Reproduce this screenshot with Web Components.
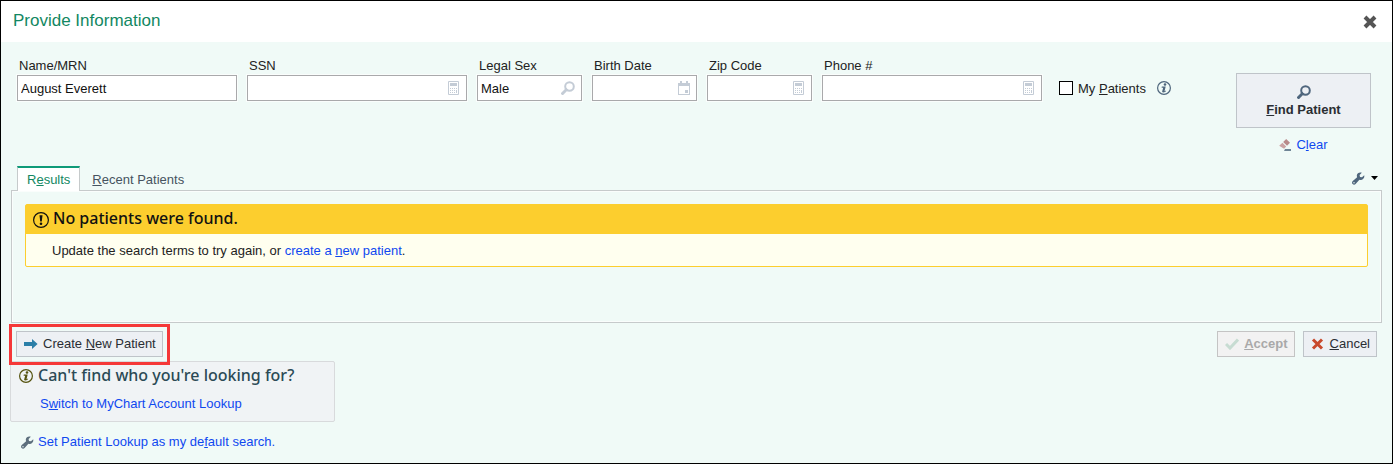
<!DOCTYPE html>
<html lang="en">
<head>
<meta charset="utf-8">
<title>Provide Information</title>
<style>
body { margin: 0; font: 13px/16px "Liberation Sans", Arial, sans-serif; color: #222; }
</style>
</head>
<body>
<patient-lookup></patient-lookup>
<script>
const define = (name, html, setup) => customElements.define(name, class extends HTMLElement {
  connectedCallback() {
    if (this.shadowRoot) return;
    const t = document.createElement('template');
    t.innerHTML = html;
    this.attachShadow({ mode: 'open' }).append(t.content.cloneNode(true));
    if (setup) setup(this, this.shadowRoot);
  }
});

const icons = {
  calc: [12, 14, '<path d="M.5.5h10v13H.5z" fill="#fff" stroke="#c4ccd6"/><path d="M2 2h7v3H2zM2 7h1v1H2zM4 7h1v1H4zM6 7h1v1H6zM8 7h1v1H8zM2 9h1v1H2zM4 9h1v1H4zM6 9h1v1H6zM8 9h1v3H8zM2 11h1v1H2zM4 11h1v1H4zM6 11h1v1H6z" fill="#c4ccd6"/>'],
  date: [12, 14, '<path d="M0 2h2V0h2v2h4V0h2v2h2v12H0zM1 5v8h10V5zM7 9h3v3H7z" fill="#c4ccd6" fill-rule="evenodd"/>'],
  search: [14, 14, '<circle cx="8.5" cy="5.5" r="4.3" fill="none" stroke="currentColor" stroke-width="2"/><path d="M5.2 8.800L1.600 12.400" stroke="currentColor" stroke-width="3" stroke-linecap="square"/>'],
  close: [14, 14, '<path d="M2 2l10 10M12 2L2 12" stroke="currentColor" stroke-width="4"/>'],
  info: [14, 14, '<circle cx="7" cy="7" r="6.4" fill="none" stroke="currentColor" stroke-width="1.2"/><circle cx="8" cy="3.500" r="1.3" fill="currentColor"/><path d="M4.800 5.500h3.900L7.500 10.200l1.600-.6-.3.9c-1.300.9-3.100 1.200-3.600.6-.3-.4.600-2.800 1-4.400H4.600z" fill="currentColor"/>'],
  alert: [16, 16, '<circle cx="8" cy="8" r="7.4" fill="none" stroke="currentColor" stroke-width="1.2"/><path d="M6.5 3.2h3L8.8 9.4H7.2z" fill="currentColor"/><circle cx="8" cy="11.8" r="1.3" fill="currentColor"/>'],
  eraser: [12, 12, '<path d="M7.2 0L11 3.800 8 6.800 4.200 3z" fill="#b98b8b"/><path d="M3.400 3.800L7.200 7.600 5.600 9.200c-.4.4-1 .4-1.400 0L.200 6.800z" fill="#cba3a3"/><path d="M6 10h6v2H5z" fill="#6f8596"/>'],
  wrench: [13, 13, '<path d="M12.200 3.200L10 5.300 8 4.900 7.600 3 9.800.8C7.800-.2 5 .9 4.800 3.600c0 .6.1 1.100.3 1.600L.8 9C-.2 10-.2 11.200.600 12c.9.900 2.100.900 3-.1L7.400 7.700c2.800 1 5.600-1.400 4.800-4.500zM2 10.100a.7.7 0 1 1 0 1.400.7.7 0 0 1 0-1.400z" fill="currentColor" fill-rule="evenodd"/>'],
  arrow: [14, 10, '<path d="M0 3h8V0l5.600 5L8 10V7H0z" fill="#2b7fa8"/>'],
  check: [14, 12, '<path d="M1 6l4 4L13 1.500" fill="none" stroke="#c7dcd2" stroke-width="3"/>'],
  cross: [14, 12, '<path d="M2 1.500l9 9M11 1.500l-9 9" stroke="#c8492c" stroke-width="3"/>'],
  caret: [7, 4, '<path d="M0 0h7L3.500 4z" fill="#000"/>']
};

define('pl-icon', '<style>:host{display:inline-flex;flex:none}svg{display:block}</style>', (el, root) => {
  const [w, h, body] = icons[el.getAttribute('name')];
  root.innerHTML += `<svg width="${w}" height="${h}" viewBox="0 0 ${w} ${h}" aria-hidden="true">${body}</svg>`;
});

define('pl-link', `<style>
  :host { display: inline; }
  a { color: #0f48f0; text-decoration: none; }
  </style><a href="#"><slot></slot></a>`);

define('pl-field', `<style>
  :host { display: block; flex: 0 1 220px; min-width: 0; }
  :host([short]) { flex-basis: 105px; }
  label { display: block; padding: 0 2px; line-height: 18px; white-space: nowrap; }
  .box { display: flex; align-items: center; height: 26px; box-sizing: border-box; padding-right: 6px;
         border: 1px solid #a9a9ab; background: #fff; box-shadow: 0 0 0 1px #fafdfc; color: #c4ccd6; }
  input { flex: 1; min-width: 0; padding: 2px 3px 0; border: 0; outline: 0; background: none; font: inherit; color: #111; }
  </style><label for="v"></label><div class="box"><input id="v" type="text"></div>`, (el, root) => {
  root.querySelector('label').textContent = el.getAttribute('label');
  root.querySelector('input').value = el.getAttribute('value') || '';
  const icon = el.getAttribute('icon');
  if (icon) root.querySelector('.box').insertAdjacentHTML('beforeend', `<pl-icon name="${icon}"></pl-icon>`);
});

define('pl-check', `<style>
  :host { display: flex; align-items: center; }
  label { display: flex; align-items: center; gap: 5px; white-space: nowrap; }
  input { appearance: none; width: 14px; height: 14px; margin: 0; border: 1px solid #000; background: #fff; }
  span { padding-top: 2px; }
  </style><label><input type="checkbox"><span><slot></slot></span></label>`);

define('pl-button', `<style>
  :host { display: block; position: relative; flex: none; }
  button { display: flex; align-items: center; gap: 5px; height: 26px; width: 100%; box-sizing: border-box; margin: 0; padding: 0 6px 0 7px;
           border: 1px solid #bfc4c9; background: #edf0f4; font: inherit; color: #2a2e33; white-space: nowrap; }
  button:disabled { background: #f2f2f2; color: #a9a9a9; border-color: #c4c4c4; font-weight: bold; }
  :host([large]) button { flex-direction: column; justify-content: center; height: 55px; gap: 3px; font-weight: bold; padding: 2px 0 0; }
  :host([marked])::after { content: ""; position: absolute; inset: -7px -7px -8px; border: 3px solid #f53838; z-index: 1; pointer-events: none; }
  </style><button type="button"><slot name="icon"></slot><span><slot></slot></span></button>`, (el, root) => {
  root.querySelector('button').disabled = el.hasAttribute('disabled');
});

define('pl-header', `<style>
  :host { display: flex; align-items: center; justify-content: space-between; height: 41px; padding: 0 15px 0 12px; background: #fff; }
  h1 { margin: 0; padding-bottom: 2px; font-size: 17px; line-height: 20px; font-weight: normal; color: #128762; }
  button { display: flex; padding: 0; border: 0; background: none; color: #555; }
  </style><h1><slot></slot></h1><button type="button" aria-label="Close"><pl-icon name="close"></pl-icon></button>`);

define('pl-search', `<style>
  :host { display: flex; align-items: flex-start; padding: 15px 21px 0 16px; }
  .fields { flex: 1; display: flex; gap: 10px; min-width: 0; }
  .mine { display: flex; align-items: center; gap: 11px; height: 26px; margin: 18px 0 0 7px; color: #4f667d; }
  pl-check { color: #222; }
  .go { flex: none; width: 135px; padding-top: 16px; }
  .clear { display: flex; align-items: center; justify-content: center; gap: 5px; margin-top: 9px; }
  </style>
  <div class="fields">
    <pl-field label="Name/MRN" value="August Everett"></pl-field>
    <pl-field label="SSN" icon="calc"></pl-field>
    <pl-field short label="Legal Sex" value="Male" icon="search"></pl-field>
    <pl-field short label="Birth Date" icon="date"></pl-field>
    <pl-field short label="Zip Code" icon="calc"></pl-field>
    <pl-field label="Phone #" icon="calc"></pl-field>
    <div class="mine"><pl-check>My <u>P</u>atients</pl-check><pl-icon name="info"></pl-icon></div>
  </div>
  <div class="go">
    <pl-button large><pl-icon slot="icon" name="search" style="color:#4f667d"></pl-icon><u>F</u>ind Patient</pl-button>
    <div class="clear"><pl-icon name="eraser"></pl-icon><pl-link>C<u>l</u>ear</pl-link></div>
  </div>`);

define('pl-tabs', `<style>
  :host { display: block; padding: 13px 10px 0; }
  .bar { display: flex; align-items: flex-end; padding: 0 4px 0 6px; }
  .tab { height: 24px; box-sizing: border-box; padding: 4px 12px 0; border: 0; background: none; font: inherit; color: #46535f; }
  .tab.on { position: relative; z-index: 1; padding: 0 9px; margin-bottom: -1px; height: 25px; border: 1px solid #c6cacb; border-top: 2px solid #0f9a78; border-bottom: 0; background: #fff; color: #128762; }
  .tools { display: flex; align-items: center; gap: 6px; height: 24px; margin-left: auto; padding: 0; border: 0; background: none; color: #4f667d; }
  .panel { min-height: 133px; box-sizing: border-box; padding: 13px; border: 1px solid #c6cacb; box-shadow: inset 0 0 0 1px #fafdfc; }
  </style>
  <div class="bar">
    <button type="button" class="tab on">R<u>e</u>sults</button>
    <button type="button" class="tab"><u>R</u>ecent Patients</button>
    <button type="button" class="tools" aria-label="Options"><pl-icon name="wrench"></pl-icon><pl-icon name="caret"></pl-icon></button>
  </div>
  <div class="panel"><slot></slot></div>`);

define('pl-notice', `<style>
  :host { display: block; border: 1px solid #fcce2e; border-radius: 2px; background: #ffffef; }
  h2 { display: flex; align-items: center; gap: 4px; height: 29px; margin: 0; padding: 0 7px; background: #fcce2e; color: #111;
       font: 500 16px/24px "Noto Sans", sans-serif; }
  ::slotted(span) { padding-bottom: 4px; }
  p { margin: 0; padding: 9px 26px 7px; }
  </style><h2><pl-icon name="alert"></pl-icon><slot name="title"></slot></h2><p><slot></slot></p>`);

define('pl-hint', `<style>
  :host { display: block; width: 325px; box-sizing: border-box; padding: 0 8px 9px; border: 1px solid #d8dadc; border-radius: 2px; background: #f0f3f5; }
  h2 { display: flex; align-items: center; gap: 5px; margin: 0; color: #2b4a55; font: 500 16px/26px "Noto Sans", sans-serif; }
  pl-icon { color: #55530f; padding-top: 2px; }
  p { margin: 0; padding: 8px 21px 0; }
  </style><h2><pl-icon name="info"></pl-icon><slot name="title"></slot></h2><p><slot></slot></p>`);

define('patient-lookup', `<style>
  :host { display: block; min-height: 100vh; box-sizing: border-box; border: 1px solid #000; background: #f0faf7; }
  .actions { display: flex; gap: 8px; padding: 8px 15px 4px; }
  .actions pl-button:first-child { margin-right: auto; }
  pl-hint { margin-left: 9px; }
  .default { display: flex; align-items: center; gap: 4px; padding: 12px 20px; color: #5d6f7d; }
  </style>
  <pl-header>Provide Information</pl-header>
  <pl-search></pl-search>
  <pl-tabs>
    <pl-notice><span slot="title">No patients were found.</span>Update the search terms to try again, or <pl-link>create a <u>n</u>ew patient</pl-link>.</pl-notice>
  </pl-tabs>
  <div class="actions">
    <pl-button marked><pl-icon slot="icon" name="arrow"></pl-icon>Create <u>N</u>ew Patient</pl-button>
    <pl-button disabled><pl-icon slot="icon" name="check"></pl-icon><u>A</u>ccept</pl-button>
    <pl-button><pl-icon slot="icon" name="cross"></pl-icon><u>C</u>ancel</pl-button>
  </div>
  <pl-hint><span slot="title">Can't find who you're looking for?</span><pl-link>S<u>w</u>itch to MyChart Account Lookup</pl-link></pl-hint>
  <div class="default"><pl-icon name="wrench"></pl-icon><pl-link>Set Patient Lookup as my de<u>f</u>ault search.</pl-link></div>`);
</script>
</body>
</html>
